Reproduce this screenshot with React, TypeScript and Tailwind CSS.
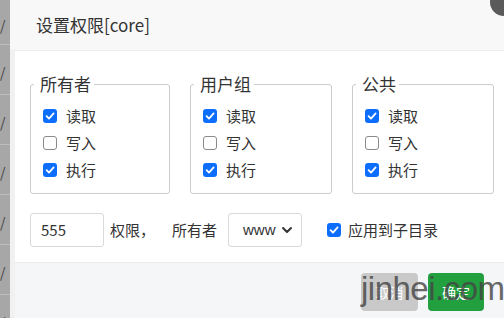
import React from "react";

const font = { fontFamily: '"Noto Sans CJK SC", "Noto Sans", sans-serif' };

function Check({ on }: { on: boolean }) {
  if (on)
    return (
      <span className="w-[14px] h-[14px] rounded-[3px] bg-[#0d6efd] flex items-center justify-center shrink-0">
        <svg width="10" height="10" viewBox="0 0 10 10">
          <path d="M1.6 5.2 L4 7.6 L8.6 2.4" fill="none" stroke="#fff" strokeWidth="1.8" strokeLinecap="round" strokeLinejoin="round" />
        </svg>
      </span>
    );
  return <span className="w-[14px] h-[14px] rounded-[3px] border border-[#8a8a8a] bg-white shrink-0" />;
}

function Row({ on, label }: { on: boolean; label: string }) {
  return (
    <div className="h-[27px] flex items-center gap-[9px]">
      <Check on={on} />
      <span className="text-[15px] text-[#333] leading-none">{label}</span>
    </div>
  );
}

function Box({ title, w }: { title: string; w: string }) {
  return (
    <fieldset className={`${w} border border-[#ccc] rounded-[3px] px-[12px] pt-[7px] pb-[10px]`}>
      <legend className="ml-[-9px] pl-[6px] pr-[3px] text-[17px] leading-[22px] text-[#333]">{title}</legend>
      <Row on={true} label="读取" />
      <Row on={false} label="写入" />
      <Row on={true} label="执行" />
    </fieldset>
  );
}

export default function App() {
  const rows = [45, 50, 50, 50, 50, 50, 50];
  return (
    <div className="w-[504px] h-[318px] flex overflow-hidden relative bg-white" style={font}>
      <div className="w-[10px] bg-[#a7a7a7] flex flex-col shrink-0">
        {rows.map((h, i) => (
          <div
            key={i}
            className={`${i === 0 ? "h-[45px]" : "h-[50px]"} shrink-0 border-b border-[#bcbcbc] flex items-center pt-[6px] text-[14px] text-[#444]`}
          >
            /
          </div>
        ))}
      </div>
      <div className="flex-1 flex flex-col">
        <div className="h-[51px] shrink-0 bg-[#f8f8f8] border-b border-[#eeeeee] flex items-center pl-[26px] text-[17px] text-[#333]">
          设置权限[core]
        </div>
        <div className="flex border-l-[5px] border-[#f1f1f1] bg-white pl-[15px] pt-[22px] pb-[15px] flex-col">
          <div className="flex gap-[20px]">
            <Box title="所有者" w="w-[140px]" />
            <Box title="用户组" w="w-[142px]" />
            <Box title="公共" w="w-[142px]" />
          </div>
          <div className="flex items-center mt-[19px] h-[34px] text-[15px] text-[#333]">
            <div className="w-[74px] h-[34px] border border-[#d9d9d9] rounded-[3px] flex items-center pl-[10px]">555</div>
            <span className="ml-[6px]">权限，</span>
            <span className="ml-[17px]">所有者</span>
            <div className="ml-[11px] w-[74px] h-[34px] border border-[#d9d9d9] rounded-[3px] flex items-center pl-[14px] pr-[8px] justify-between">
              <span style={{ fontFamily: '"Liberation Sans", sans-serif' }}>www</span>
              <svg width="12" height="12" viewBox="0 0 12 12">
                <path d="M2 4 L6 8 L10 4" fill="none" stroke="#333" strokeWidth="2" strokeLinecap="round" strokeLinejoin="round" />
              </svg>
            </div>
            <span className="ml-[25px]">
              <Check on={true} />
            </span>
            <span className="ml-[7px]">应用到子目录</span>
          </div>
        </div>
        <div className="flex-1 border-l-[5px] border-[#f1f1f1] bg-[#f5f6f7] border-t border-t-[#eeeeee] flex justify-end items-start pt-[10px] pr-[20px] gap-[10px]">
          <div className="w-[57px] h-[38px] rounded-[4px] bg-[#c9c9c9] text-white text-[14px] flex items-center justify-center">取消</div>
          <div className="w-[56px] h-[38px] rounded-[4px] bg-[#22a03f] text-white text-[14px] flex items-center justify-center">确定</div>
        </div>
      </div>
      <div className="absolute right-[-14px] top-[-12px] w-[28px] h-[28px] rounded-full bg-[#5a5a5a]" />
      <div
        className="absolute left-[361px] top-[272px] text-[33px] leading-none tracking-[-0.5px] text-[#444] opacity-80 pointer-events-none"
        style={{ fontFamily: '"Liberation Sans", sans-serif' }}
      >
        jinhei.com
      </div>
    </div>
  );
}
